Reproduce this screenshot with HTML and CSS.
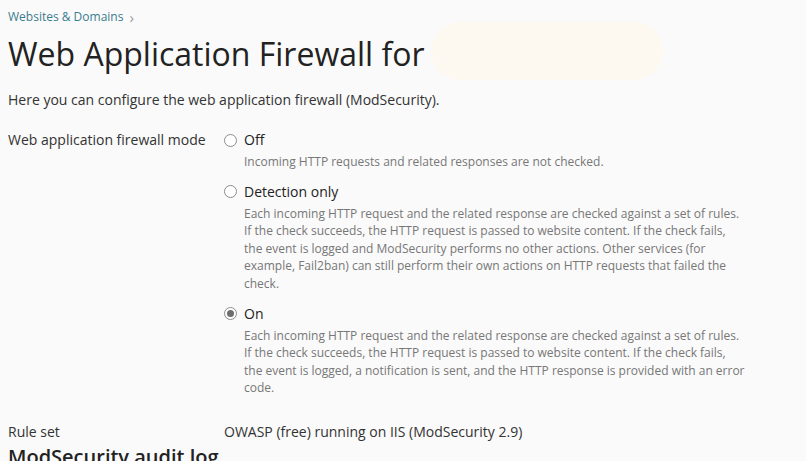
FILE: index.html
```html
<!DOCTYPE html>
<html>
<head>
<meta charset="utf-8">
<link rel="stylesheet" href="styles.css">
</head>
<body>
<div class="page">
  <nav class="crumbs"><a class="crumb" href="#">Websites &amp; Domains</a><span class="chev">›</span></nav>
  <h1 class="title">Web Application Firewall for <span class="blur"></span></h1>
  <p class="intro">Here you can configure the web application firewall (ModSecurity).</p>
  <div class="form-row">
    <div class="label">Web application firewall mode</div>
    <div class="options">
      <div class="opt">
        <label class="radio-line"><span class="radio"></span><span class="opt-title">Off</span></label>
        <div class="hint">Incoming HTTP requests and related responses are not checked.</div>
      </div>
      <div class="opt">
        <label class="radio-line"><span class="radio"></span><span class="opt-title">Detection only</span></label>
        <div class="hint">Each incoming HTTP request and the related response are checked against a set of rules. If the check succeeds, the HTTP request is passed to website content. If the check fails, the event is logged and ModSecurity performs no other actions. Other services (for example, Fail2ban) can still perform their own actions on HTTP requests that failed the check.</div>
      </div>
      <div class="opt">
        <label class="radio-line"><span class="radio checked"></span><span class="opt-title">On</span></label>
        <div class="hint">Each incoming HTTP request and the related response are checked against a set of rules. If the check succeeds, the HTTP request is passed to website content. If the check fails, the event is logged, a notification is sent, and the HTTP response is provided with an error code.</div>
      </div>
    </div>
  </div>
  <div class="form-row rule">
    <div class="label">Rule set</div>
    <div class="value">OWASP (free) running on IIS (ModSecurity 2.9)</div>
  </div>
  <h2 class="section">ModSecurity audit log</h2>
</div>
</body>
</html>
```
FILE: styles.css
```css
html, body {
  margin: 0;
  padding: 0;
  background: #fafafa;
}
body {
  font-family: "Open Sans", "Noto Sans", sans-serif;
  color: #222;
}
.page {
  padding: 9px 8px 0 8px;
}
.crumbs {
  font-size: 12px;
  line-height: 16px;
  display: flex;
  align-items: center;
  gap: 6px;
}
.crumb {
  color: #3a7c8f;
  text-decoration: none;
}
.chev {
  color: #9a9a9a;
  font-size: 15px;
  line-height: 16px;
}
.title {
  margin: 9px 0 0 0;
  font-size: 32px;
  font-weight: 400;
  line-height: 40px;
  color: #222;
  display: flex;
  align-items: flex-start;
}
.blur {
  display: inline-block;
  width: 232px;
  height: 58px;
  margin: -12px 0 -6px 6px;
  border-radius: 30px;
  background: #fdf9f0;
}
.intro {
  margin: 16px 0 0 0;
  font-size: 14px;
  line-height: 20px;
  color: #333;
}
.form-row {
  display: flex;
  margin-top: 20px;
}
.label {
  width: 216px;
  flex: none;
  font-size: 14px;
  line-height: 20px;
  color: #333;
}
.options {
  display: flex;
  flex-direction: column;
  gap: 11px;
}
.radio-line {
  display: flex;
  align-items: center;
  height: 20px;
}
.radio {
  width: 11px;
  height: 11px;
  border: 1px solid #8c8c8c;
  border-radius: 50%;
  background: #fff;
  margin-right: 7px;
  position: relative;
  flex: none;
}
.radio.checked::after {
  content: "";
  position: absolute;
  left: 2px;
  top: 2px;
  width: 7px;
  height: 7px;
  border-radius: 50%;
  background: #6d6d6d;
}
.opt-title {
  font-size: 14px;
  line-height: 20px;
  color: #222;
}
.hint {
  margin-top: 3px;
  padding-left: 20px;
  width: 503px;
  font-size: 12px;
  line-height: 17.6px;
  color: #777;
}
.form-row.rule {
  margin-top: 25px;
}
.value {
  font-size: 14px;
  line-height: 20px;
  color: #333;
}
.section {
  margin: 2px 0 0 0;
  font-size: 20px;
  font-weight: 600;
  line-height: 26px;
  color: #222;
}
```
